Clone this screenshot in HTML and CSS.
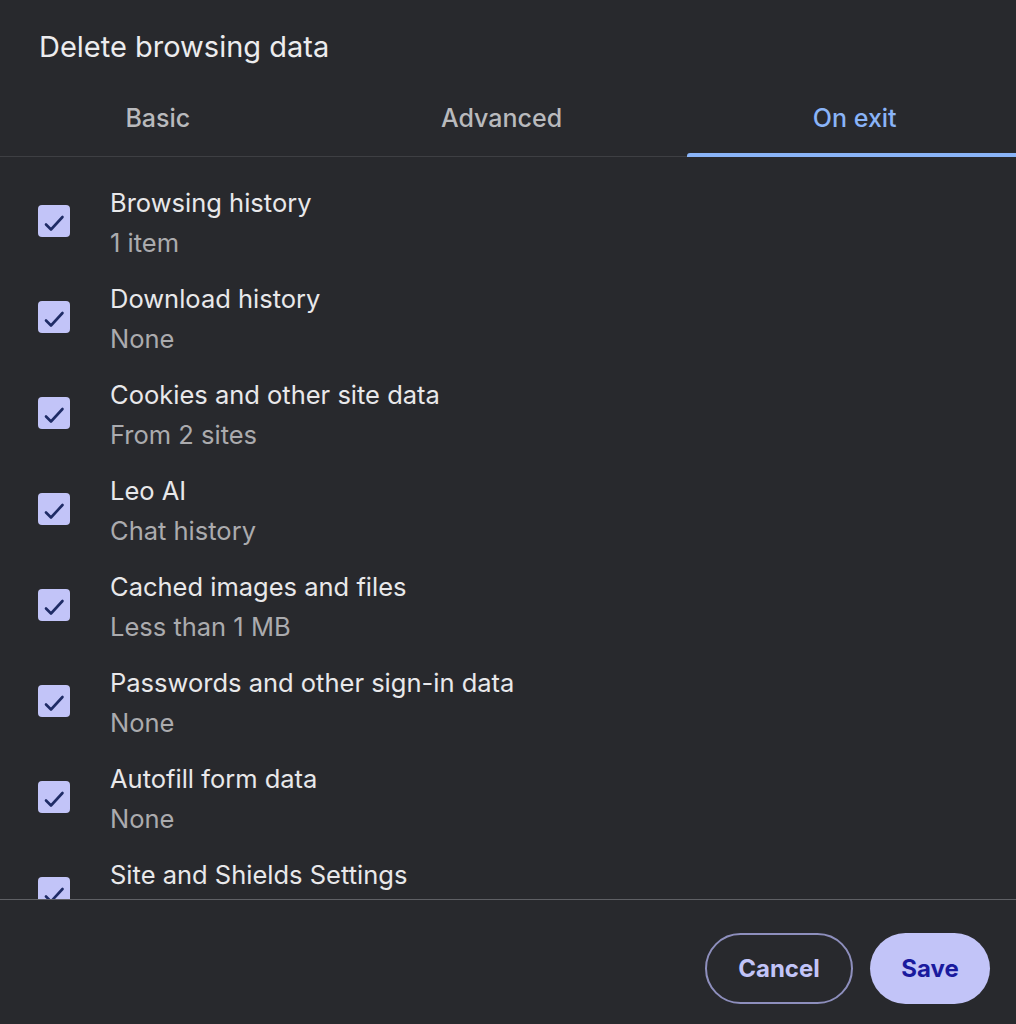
FILE: index.html
```html
<!DOCTYPE html>
<html>
<head>
<meta charset="utf-8">
<link rel="stylesheet" href="styles.css">
</head>
<body>
<div class="dialog">
  <h1 class="title">Delete browsing data</h1>
  <div class="tabs">
    <div class="tab">Basic</div>
    <div class="tab">Advanced</div>
    <div class="tab active">On exit</div>
  </div>
  <div class="list">
    <div class="row"><span class="cb"><svg viewBox="0 0 32 32"><path d="M8 19.5 L13 24.5 L24.5 12"/></svg></span><div class="text"><div class="label">Browsing history</div><div class="sub">1 item</div></div></div>
    <div class="row"><span class="cb"><svg viewBox="0 0 32 32"><path d="M8 19.5 L13 24.5 L24.5 12"/></svg></span><div class="text"><div class="label">Download history</div><div class="sub">None</div></div></div>
    <div class="row"><span class="cb"><svg viewBox="0 0 32 32"><path d="M8 19.5 L13 24.5 L24.5 12"/></svg></span><div class="text"><div class="label">Cookies and other site data</div><div class="sub">From 2 sites</div></div></div>
    <div class="row"><span class="cb"><svg viewBox="0 0 32 32"><path d="M8 19.5 L13 24.5 L24.5 12"/></svg></span><div class="text"><div class="label">Leo AI</div><div class="sub">Chat history</div></div></div>
    <div class="row"><span class="cb"><svg viewBox="0 0 32 32"><path d="M8 19.5 L13 24.5 L24.5 12"/></svg></span><div class="text"><div class="label">Cached images and files</div><div class="sub">Less than 1 MB</div></div></div>
    <div class="row"><span class="cb"><svg viewBox="0 0 32 32"><path d="M8 19.5 L13 24.5 L24.5 12"/></svg></span><div class="text"><div class="label">Passwords and other sign-in data</div><div class="sub">None</div></div></div>
    <div class="row"><span class="cb"><svg viewBox="0 0 32 32"><path d="M8 19.5 L13 24.5 L24.5 12"/></svg></span><div class="text"><div class="label">Autofill form data</div><div class="sub">None</div></div></div>
    <div class="row"><span class="cb"><svg viewBox="0 0 32 32"><path d="M8 19.5 L13 24.5 L24.5 12"/></svg></span><div class="text"><div class="label">Site and Shields Settings</div><div class="sub-spacer"></div></div></div>
  </div>
  <div class="footer">
    <button class="btn cancel">Cancel</button>
    <button class="btn save">Save</button>
  </div>
</div>
</body>
</html>
```

FILE: styles.css
```css
html, body {
  margin: 0;
  padding: 0;
  background: #28292d;
}
body {
  font-family: Inter, "Noto Sans", sans-serif;
  color: #e8e8ea;
}
.dialog {
  width: 1016px;
  height: 1024px;
  display: flex;
  flex-direction: column;
  background: #28292d;
  overflow: hidden;
}
.title {
  margin: 0;
  padding: 27px 39px 0;
  height: 39px;
  font-size: 29px;
  font-weight: 400;
  line-height: 39px;
  color: #ececee;
}
.tabs {
  display: flex;
  border-bottom: 1px solid #3e3f43;
  height: 91px;
  box-sizing: border-box;
  margin-right: -6px;
}
.tab {
  flex: 1 1 auto;
  text-align: center;
  font-size: 25px;
  font-weight: 500;
  color: #b9babd;
  padding-top: 35px;
  line-height: 34px;
  box-sizing: border-box;
  position: relative;
}
.tab.active {
  color: #8ab4f8;
}
.tab.active::after {
  content: "";
  position: absolute;
  left: 0;
  right: 0;
  bottom: -1px;
  height: 4px;
  background: #8ab4f8;
  border-radius: 3px 3px 0 0;
}
.list {
  flex: 1;
  overflow: hidden;
  padding: 26px 0 0 38px;
  border-bottom: 1px solid #5f6065;
}
.row {
  display: flex;
  align-items: center;
  height: 80px;
  margin-bottom: 16px;
}
.cb {
  width: 32px;
  height: 32px;
  border-radius: 4px;
  background: #c2c4f8;
  flex: none;
  display: block;
  margin-top: -4px;
}
.cb svg {
  width: 32px;
  height: 32px;
  display: block;
  fill: none;
  stroke: #1f2c66;
  stroke-width: 2.6;
  stroke-linecap: round;
  stroke-linejoin: round;
}
.text {
  margin-left: 40px;
}
.label {
  font-size: 25.5px;
  line-height: 40px;
  color: #e8e8ea;
}
.sub {
  font-size: 25.5px;
  line-height: 40px;
  color: #ababae;
}
.sub-spacer {
  height: 40px;
}
.footer {
  display: flex;
  justify-content: flex-end;
  align-items: flex-start;
  gap: 17px;
  padding: 33px 26px 0 0;
  height: 91px;
  flex: none;
}
.btn {
  font-family: Inter, "Noto Sans", sans-serif;
  font-size: 24px;
  font-weight: 700;
  height: 71px;
  border-radius: 36px;
  cursor: pointer;
}
.cancel {
  width: 148px;
  background: transparent;
  border: 2px solid #8e8fbd;
  color: #c2c4f8;
}
.save {
  width: 120px;
  background: #c2c4f8;
  border: none;
  color: #1a1a9e;
}
```
